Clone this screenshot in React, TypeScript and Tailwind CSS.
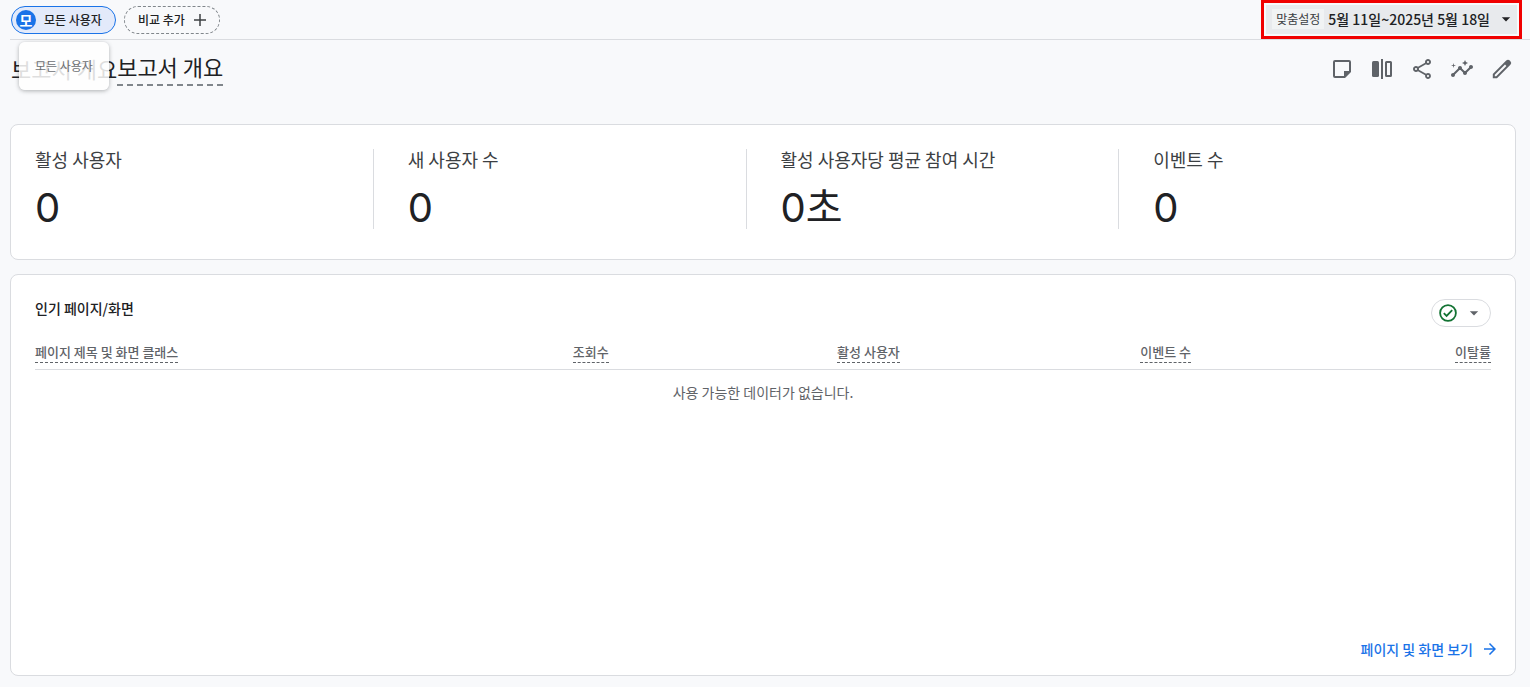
import React from "react";
import {
  MdArrowDropDown,
  MdArrowForward,
  MdOutlineShare,
  MdInsights,
} from "react-icons/md";

const metrics = [
  { label: "활성 사용자", value: "0" },
  { label: "새 사용자 수", value: "0" },
  { label: "활성 사용자당 평균 참여 시간", value: "0초" },
  { label: "이벤트 수", value: "0" },
];

const columns = ["페이지 제목 및 화면 클래스", "조회수", "활성 사용자", "이벤트 수", "이탈률"];

function NoteIcon() {
  return (
    <svg viewBox="0 0 24 24" className="size-6" fill="currentColor" aria-hidden="true">
      <path d="M19 5v9h-5v5H5V5h14m0-2H5a2 2 0 0 0-2 2v14a2 2 0 0 0 2 2h10l6-6V5a2 2 0 0 0-2-2z" />
    </svg>
  );
}

function CompareIcon() {
  return (
    <svg viewBox="0 0 24 24" className="size-6" fill="currentColor" aria-hidden="true">
      <rect x="2" y="4" width="7" height="16" rx="1.5" />
      <rect x="11" y="2" width="2" height="20" />
      <path fillRule="evenodd" d="M16.5 4h4A1.5 1.5 0 0 1 22 5.5v13a1.5 1.5 0 0 1-1.5 1.5h-4a1.5 1.5 0 0 1-1.5-1.5v-13A1.5 1.5 0 0 1 16.5 4zM17 6v12h3V6z" />
    </svg>
  );
}

function PencilIcon() {
  return (
    <svg viewBox="0 0 24 24" className="size-6" fill="currentColor" aria-hidden="true">
      <path
        fillRule="evenodd"
        d="M2.8 21.2V17L16.2 3.6a2.6 2.6 0 0 1 3.6 0l.6.6a2.6 2.6 0 0 1 0 3.6L7 21.2zM4.8 17.8v1.4h1.4L16.4 9 15 7.6z"
      />
    </svg>
  );
}

function CheckIcon() {
  return (
    <svg viewBox="0 0 20 20" className="size-5" fill="none" stroke="currentColor" strokeWidth="1.8" aria-hidden="true">
      <circle cx="10" cy="10" r="7.9" />
      <path d="m5.8 10.2 2.8 2.8 5.6-5.8" />
    </svg>
  );
}

const tools = [
  { label: "메모", icon: <NoteIcon /> },
  { label: "비교 수정", icon: <CompareIcon /> },
  { label: "공유", icon: <MdOutlineShare className="size-6" /> },
  { label: "통계", icon: <MdInsights className="size-6" /> },
  { label: "보고서 맞춤설정", icon: <PencilIcon /> },
];

export default function App() {
  return (
    <div className="flex min-h-screen flex-col bg-[#f8f9fb] font-['Noto_Sans_CJK_KR',sans-serif] text-[#202124]">
      <header className="ml-2.5 flex h-10 items-start justify-between border-b border-[#dadce0] pr-2 pl-px">
        <div className="flex gap-2 pt-1.5">
          <div className="relative">
            <button className="flex h-7 items-center gap-2 rounded-full border border-[#1a73e8] bg-[#e3eafa] pr-[13px] pl-1 text-xs font-medium">
              <span className="flex size-5 items-center justify-center rounded-full bg-[#1a73e8] text-sm font-bold text-white">
                모
              </span>
              모든 사용자
            </button>
            <div
              role="tooltip"
              className="absolute top-9 left-2 z-10 flex h-12 items-center rounded-md bg-white/85 px-4 text-xs whitespace-nowrap text-[#6c6f72] shadow-[0_1px_4px_rgba(60,64,67,0.4)]"
            >
              모든 사용자
            </div>
          </div>
          <button className="flex h-7 items-center gap-2 rounded-full border border-dashed border-[#80868b] pr-3 pl-[13px] text-xs font-medium">
            비교 추가
            <svg viewBox="0 0 14 14" className="size-3.5" stroke="#3c4043" strokeWidth="1.5" aria-hidden="true">
              <path d="M7 1v12M1 7h12" />
            </svg>
          </button>
        </div>
        <div className="border-3 border-[#f00000] p-0.5">
          <button className="flex h-[29px] items-center bg-[#e8eaed] pr-px pb-0.5 pl-1.5">
            <span className="bg-[#f1f3f4] px-1 text-xs leading-5 text-[#3c4043]">맞춤설정</span>
            <span className="pr-1.5 pl-1 text-sm font-medium">5월 11일~2025년 5월 18일</span>
            <MdArrowDropDown className="size-5" />
          </button>
        </div>
      </header>

      <div className="flex h-[84px] items-start justify-between pt-3 pr-4 pl-[11px]">
        <h1 className="flex text-[22px] leading-8">
          <span aria-hidden="true">보고서 개요</span>
          <span className="border-b-2 border-dashed border-[#80868b] pb-1 leading-7">보고서 개요</span>
        </h1>
        <div className="flex gap-4 pt-[5px] text-[#5f6368]">
          {tools.map((tool) => (
            <button key={tool.label} aria-label={tool.label}>
              {tool.icon}
            </button>
          ))}
        </div>
      </div>

      <main className="flex flex-1 flex-col gap-3.5 pr-3.5 pb-[11px] pl-2.5">
        <section className="flex rounded-lg border border-[#dadce0] bg-white px-6 pt-6 pb-[30px]">
          {metrics.map((metric) => (
            <div
              key={metric.label}
              className="h-20 flex-1 border-l border-[#dadce0] pl-[34px] first:border-l-0 first:pl-0"
            >
              <h2 className="text-lg leading-5 text-[#3c4043]">{metric.label}</h2>
              <p className="pt-[13px] font-['Inter','Noto_Sans_CJK_KR',sans-serif] text-[40px] leading-[52px]">
                {metric.value}
              </p>
            </div>
          ))}
        </section>

        <section className="flex flex-1 flex-col rounded-lg border border-[#dadce0] bg-white px-6 pt-6 pb-4">
          <div className="flex h-[43px] items-start justify-between">
            <h2 className="text-sm leading-[18px] font-medium">인기 페이지/화면</h2>
            <button
              aria-label="데이터 품질"
              className="flex h-7 items-center gap-1.5 rounded-full border border-[#dadce0] px-1.5 text-[#137333]"
            >
              <CheckIcon />
              <MdArrowDropDown className="size-5 text-[#5f6368]" />
            </button>
          </div>
          <table className="w-full table-fixed border-collapse">
            <colgroup>
              <col />
              <col className="w-1/5" />
              <col className="w-1/5" />
              <col className="w-1/5" />
              <col className="w-[300px]" />
            </colgroup>
            <thead>
              <tr className="border-b border-[#dadce0] text-[13px] leading-5 text-[#5f6368]">
                {columns.map((column) => (
                  <th key={column} scope="col" className="pb-1.5 text-right font-medium first:text-left">
                    <span className="inline-block border-b border-dashed border-[#5f6368]">{column}</span>
                  </th>
                ))}
              </tr>
            </thead>
            <tbody>
              <tr>
                <td colSpan={5} className="pt-3 text-center text-sm text-[#5f6368]">
                  사용 가능한 데이터가 없습니다.
                </td>
              </tr>
            </tbody>
          </table>
          <a href="#pages" className="mt-auto -mr-2 flex items-center gap-2 self-end text-sm font-medium text-[#1a73e8]">
            페이지 및 화면 보기
            <MdArrowForward className="size-[18px]" />
          </a>
        </section>
      </main>
    </div>
  );
}
